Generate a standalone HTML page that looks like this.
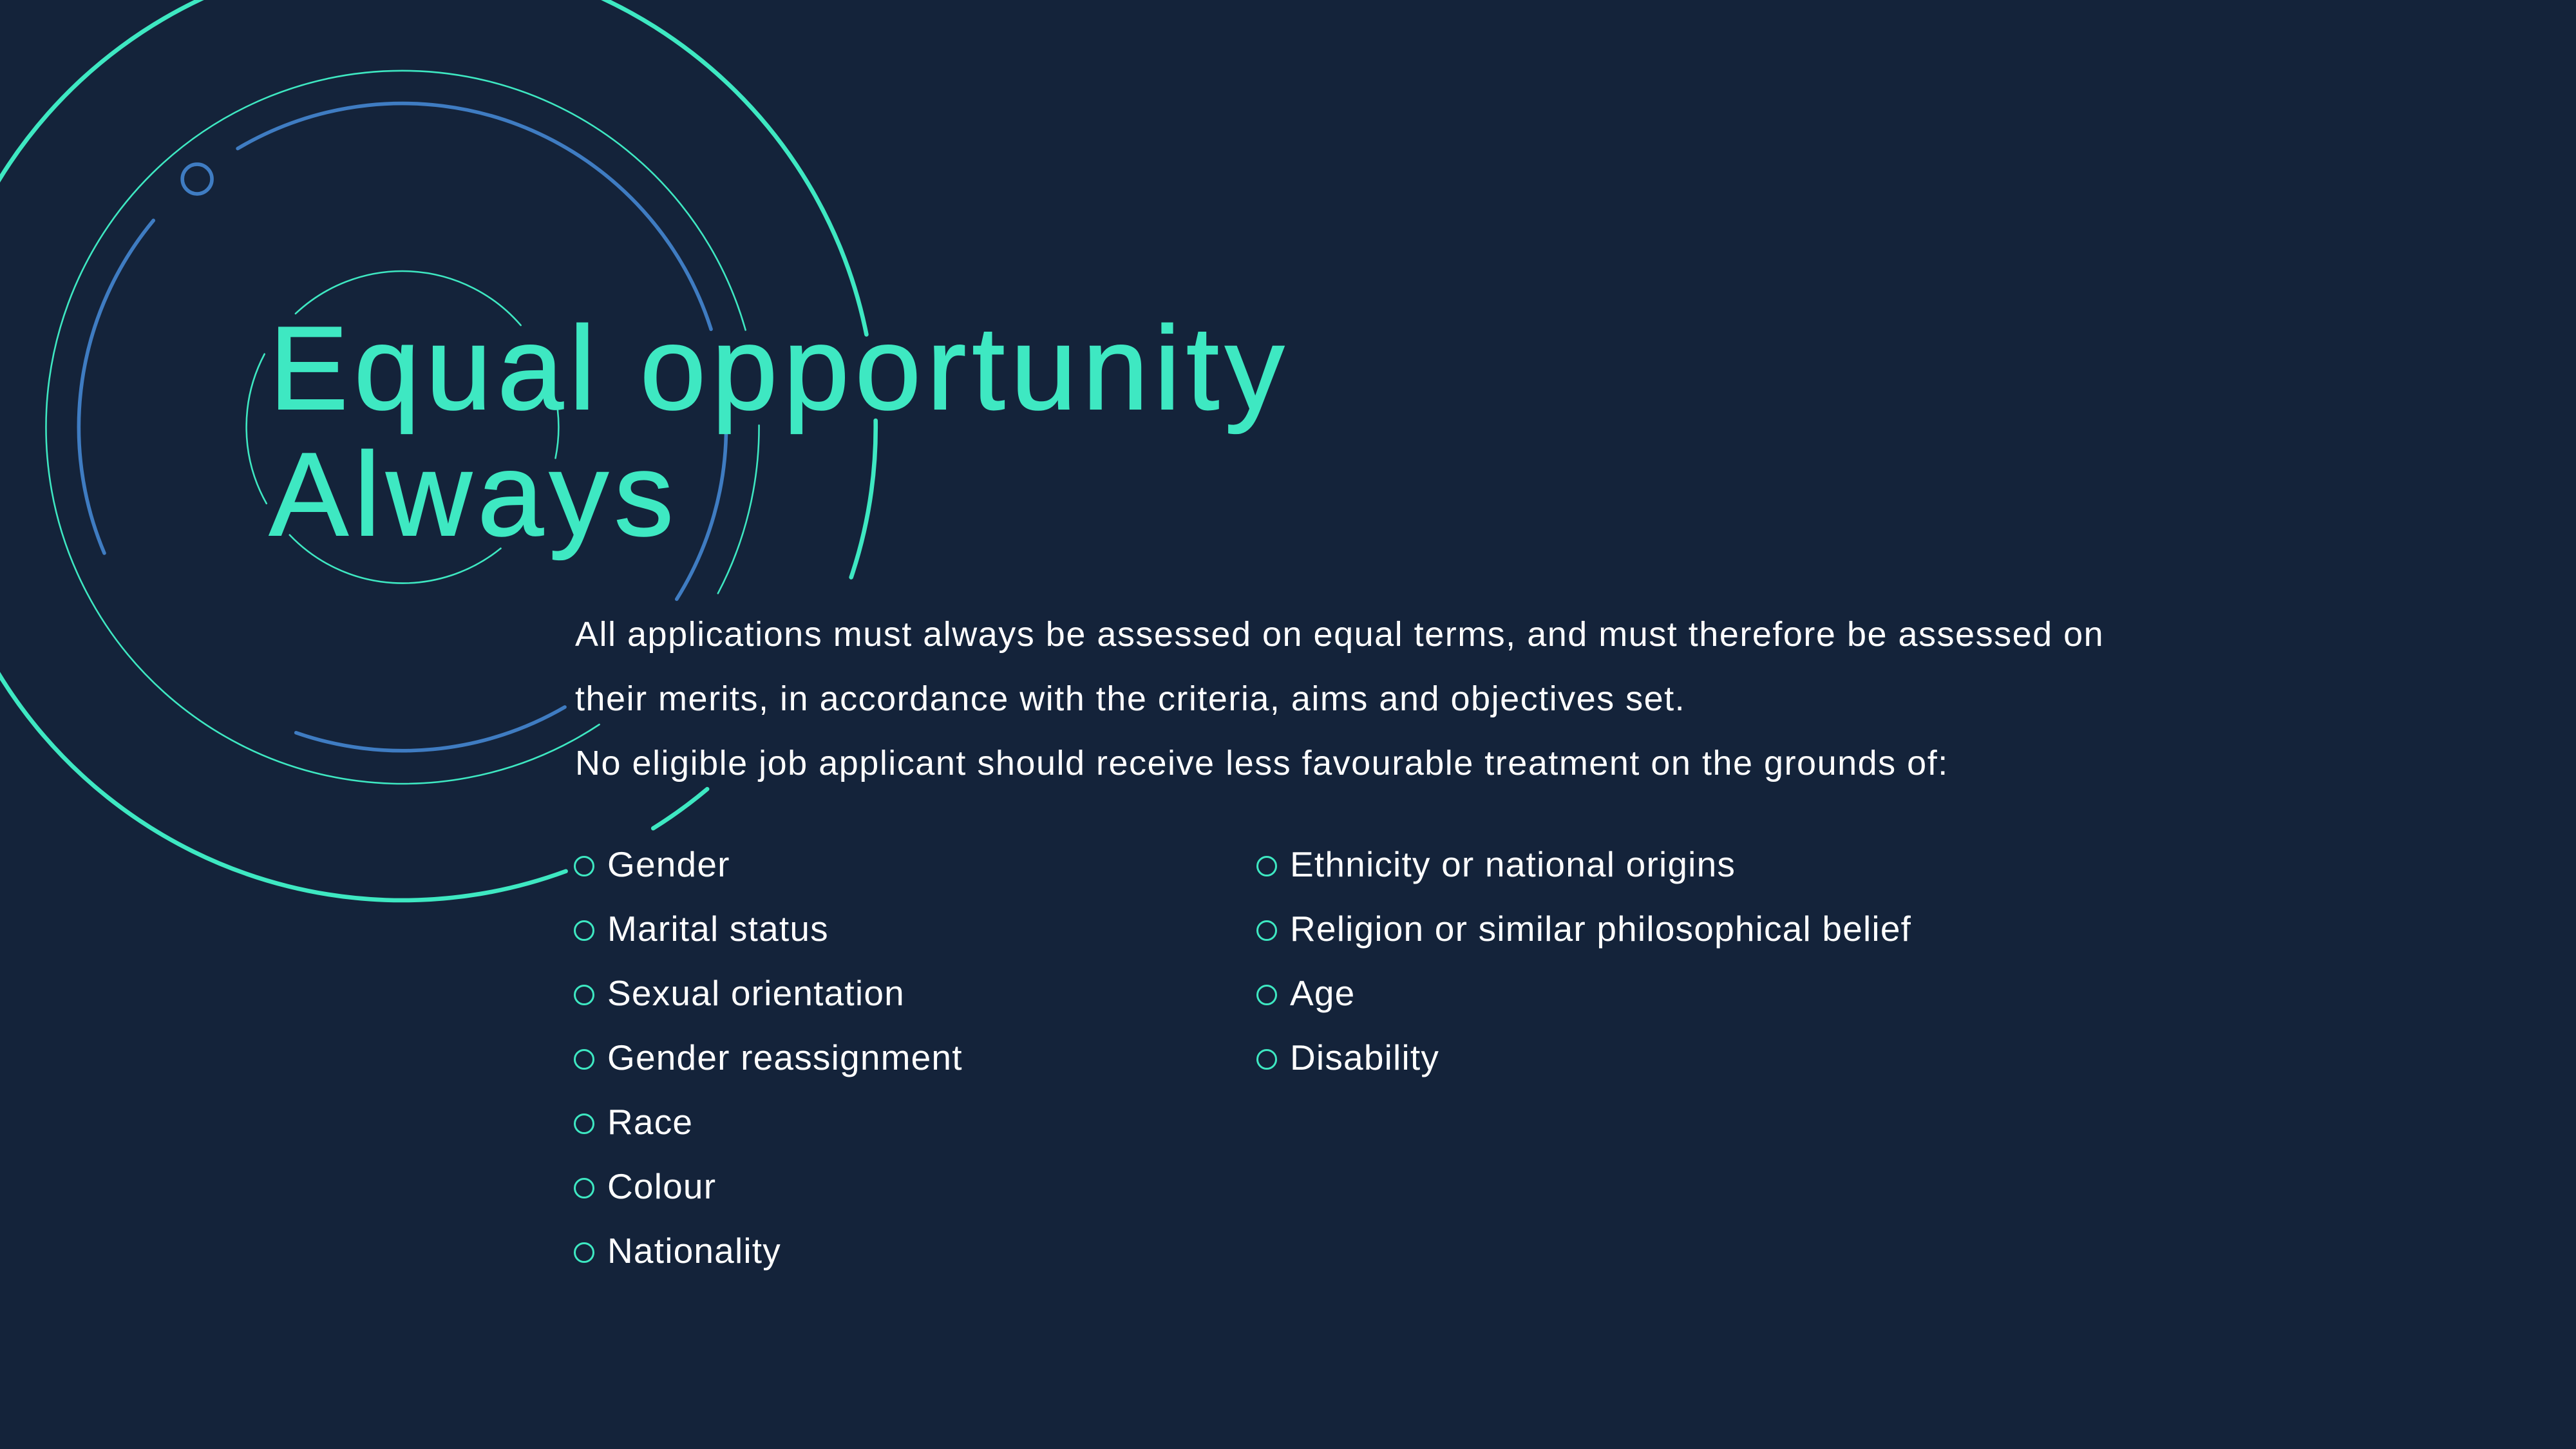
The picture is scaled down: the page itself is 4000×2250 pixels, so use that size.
<!DOCTYPE html>
<html><head><meta charset="utf-8"><style>
html,body{margin:0;padding:0}
body{width:4000px;height:2250px;background:#14233a;position:relative;overflow:hidden;font-family:"Liberation Sans",sans-serif}
svg{position:absolute;left:0;top:0}
.t{position:absolute;left:418px;top:473px;font-size:184px;line-height:196px;color:#3ee8c2;white-space:nowrap;letter-spacing:9px;-webkit-text-stroke:2px #3ee8c2}
.b{position:absolute;left:893px;top:935px;font-size:54px;line-height:100px;color:#fff;white-space:nowrap;letter-spacing:1.5px}
.l{position:absolute;top:1292px;font-size:55px;line-height:100px;color:#fff;white-space:nowrap;letter-spacing:1.2px}
.l div{position:relative;padding-left:52px}
.l div:before{content:"";position:absolute;left:0;top:37px;width:26px;height:26px;border:3px solid #3ee8c2;border-radius:50%}
</style></head><body>
<svg width="4000" height="2250" viewBox="0 0 1568 882" fill="none" stroke-linecap="round">
<g stroke="#3ee8c2" stroke-width="2.6">
<path d="M533 256 A288 288 0 0 1 518.1 351.4"/>
<path d="M430.5 480.3 A288 288 0 0 1 397.6 504.2"/>
<path d="M344.4 530.3 A288 288 0 1 1 527.4 203.6"/>
</g>
<g stroke="#3ee8c2" stroke-width="1">
<path d="M462 258.9 A217 217 0 0 1 437 361.2"/>
<path d="M364.8 441 A217 217 0 1 1 453.8 200.9"/>
<path d="M179.9 190.9 A95 95 0 0 1 317 198"/>
<path d="M339.4 249.1 A95 95 0 0 1 338.1 278.9"/>
<path d="M304.8 333.8 A95 95 0 0 1 176.3 325.6"/>
<path d="M162.2 306.5 A95 95 0 0 1 161 215.5"/>
</g>
<g stroke="#3f7cc2" stroke-width="2.2">
<path d="M144.7 90.4 A197 197 0 0 1 432.8 200.4"/>
<path d="M442 257.9 A197 197 0 0 1 411.9 364.7"/>
<path d="M343.8 430.4 A197 197 0 0 1 180.2 446"/>
<path d="M63.5 336.7 A197 197 0 0 1 93.4 134.2"/>
<circle cx="120" cy="109" r="9"/>
</g>
</svg>
<div class="t">Equal opportunity<br>Always</div>
<div class="b">All applications must always be assessed on equal terms, and must therefore be assessed on<br>their merits, in accordance with the criteria, aims and objectives set.<br>No eligible job applicant should receive less favourable treatment on the grounds of:</div>
<div class="l" style="left:891px"><div>Gender</div><div>Marital status</div><div>Sexual orientation</div><div>Gender reassignment</div><div>Race</div><div>Colour</div><div>Nationality</div></div>
<div class="l" style="left:1951px"><div>Ethnicity or national origins</div><div>Religion or similar philosophical belief</div><div>Age</div><div>Disability</div></div>
</body></html>
